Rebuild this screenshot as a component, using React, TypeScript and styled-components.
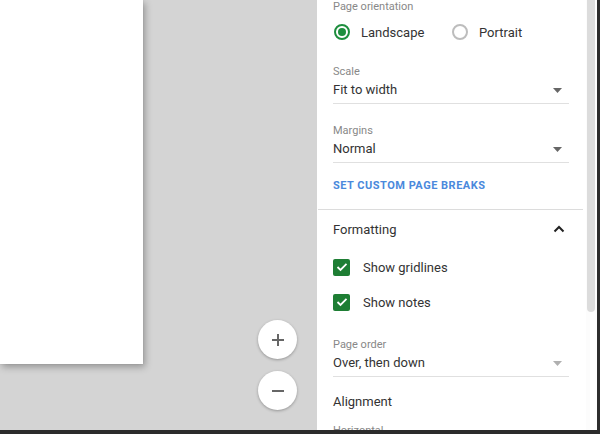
import React from 'react';
import styled, { createGlobalStyle } from 'styled-components';

const GlobalStyle = createGlobalStyle`
  html, body {
    margin: 0;
    padding: 0;
    overflow: hidden;
  }
  body {
    font-family: Roboto, "Liberation Sans", Arial, sans-serif;
  }
  * {
    box-sizing: border-box;
  }
`;

const Frame = styled.div`
  width: 600px;
  height: 434px;
  display: flex;
  flex-direction: column;
  overflow: hidden;
`;

const Main = styled.div`
  flex: 1;
  display: flex;
  min-height: 0;
`;

const Canvas = styled.div`
  position: relative;
  flex: 1;
  background: #d4d4d4;
  overflow: hidden;
`;

const Sheet = styled.div`
  width: 143px;
  height: 364px;
  background: #fff;
  box-shadow: 2px 3px 7px rgba(0, 0, 0, 0.3), 0 0 1px rgba(0, 0, 0, 0.15);
`;

const ZoomControls = styled.div`
  position: absolute;
  right: 20px;
  bottom: 20px;
  display: flex;
  flex-direction: column;
  gap: 12px;
`;

const ZoomButton = styled.button`
  width: 39px;
  height: 39px;
  border-radius: 50%;
  border: none;
  background: #fff;
  padding: 0;
  display: flex;
  align-items: center;
  justify-content: center;
  box-shadow: 0 1px 3px rgba(0, 0, 0, 0.3);
  cursor: pointer;
`;

const Panel = styled.div`
  width: 280px;
  display: flex;
  background: #fff;
`;

const Content = styled.div`
  flex: 1;
  display: flex;
  flex-direction: column;
  overflow: hidden;

  & > * {
    flex-shrink: 0;
  }
`;

const Section = styled.div`
  padding: 0 17px 0 16px;
  display: flex;
  flex-direction: column;

  & > * {
    flex-shrink: 0;
  }
`;

const Label = styled.div<{ $top?: number }>`
  margin-top: ${p => p.$top ?? 0}px;
  font-size: 11px;
  line-height: 14px;
  color: #888;
`;

const RadioRow = styled.div`
  margin-top: 6px;
  height: 24px;
  display: flex;
  align-items: center;
`;

const RadioOption = styled.label`
  display: flex;
  align-items: center;
  gap: 11px;
  width: 118px;
  font-size: 13px;
  color: #333;
`;

const RadioCircle = styled.span<{ $on?: boolean }>`
  width: 16px;
  height: 16px;
  border-radius: 50%;
  border: 2px solid ${p => (p.$on ? '#1e8e3e' : '#bdbdbd')};
  display: flex;
  align-items: center;
  justify-content: center;
  margin-left: 1px;

  &::after {
    content: '';
    width: 8px;
    height: 8px;
    border-radius: 50%;
    background: ${p => (p.$on ? '#1e8e3e' : 'transparent')};
  }
`;

const Select = styled.div<{ $disabled?: boolean }>`
  margin-top: 2px;
  display: flex;
  align-items: center;
  justify-content: space-between;
  height: 23px;
  padding-bottom: 4px;
  border-bottom: 1px solid #e0e0e0;
  font-size: 13px;
  line-height: 18px;
  color: #333;

  svg {
    margin-right: 7px;
    fill: ${p => (p.$disabled ? '#b0b0b0' : '#666')};
  }
`;

const LinkButton = styled.div`
  margin-top: 16px;
  font-size: 11px;
  line-height: 14px;
  font-weight: 700;
  color: #4a89dc;
  letter-spacing: 0.5px;
`;

const Divider = styled.div`
  margin: 16px 3px 0 1px;
  height: 1px;
  background: #dcdcdc;
`;

const Heading = styled.div<{ $top: number }>`
  margin-top: ${p => p.$top}px;
  height: 18px;
  display: flex;
  align-items: center;
  justify-content: space-between;
  font-size: 13px;
  color: #333;

  svg {
    margin-right: 4px;
  }
`;

const CheckRow = styled.label<{ $top: number }>`
  margin-top: ${p => p.$top}px;
  height: 24px;
  display: flex;
  align-items: center;
  gap: 13px;
  font-size: 13px;
  color: #333;
`;

const CheckBox = styled.span`
  width: 17px;
  height: 17px;
  border-radius: 2px;
  background: #1e7e34;
  display: flex;
  align-items: center;
  justify-content: center;
`;

const ScrollTrack = styled.div`
  width: 11px;
  padding-left: 1px;
  background: #fcfcfc;
`;

const Thumb = styled.div`
  width: 8px;
  height: 312px;
  background: #dcdcdc;
  border-radius: 0 0 4px 4px;
`;

const EdgeRight = styled.div`
  width: 3px;
  background: #2b2b2b;
`;

const BottomBar = styled.div`
  height: 4px;
  background: #2b2b2b;
`;

const Caret = () => (
  <svg width="9" height="5" viewBox="0 0 9 5">
    <path d="M0 0 L9 0 L4.5 5 Z" />
  </svg>
);

const ChevronUp = () => (
  <svg width="12" height="8" viewBox="0 0 12 8">
    <path d="M1.5 6.5 L6 2 L10.5 6.5" fill="none" stroke="#222" strokeWidth="2" />
  </svg>
);

const Check = () => (
  <svg width="12" height="10" viewBox="0 0 12 10">
    <path d="M1.5 5 L4.5 8 L10.5 1.8" fill="none" stroke="#fff" strokeWidth="1.8" />
  </svg>
);

const Plus = () => (
  <svg width="14" height="14" viewBox="0 0 14 14">
    <path d="M7 1 V13 M1 7 H13" stroke="#666" strokeWidth="2" />
  </svg>
);

const Minus = () => (
  <svg width="14" height="14" viewBox="0 0 14 14">
    <path d="M1 7 H13" stroke="#666" strokeWidth="2" />
  </svg>
);

const App = () => {
  return (
    <Frame>
      <GlobalStyle />
      <Main>
        <Canvas>
          <Sheet />
          <ZoomControls>
            <ZoomButton aria-label="Zoom in">
              <Plus />
            </ZoomButton>
            <ZoomButton aria-label="Zoom out">
              <Minus />
            </ZoomButton>
          </ZoomControls>
        </Canvas>
        <Panel>
          <Content>
            <Section>
              <Label>Page orientation</Label>
              <RadioRow>
                <RadioOption>
                  <RadioCircle $on />
                  Landscape
                </RadioOption>
                <RadioOption>
                  <RadioCircle />
                  Portrait
                </RadioOption>
              </RadioRow>

              <Label $top={21}>Scale</Label>
              <Select>
                Fit to width
                <Caret />
              </Select>

              <Label $top={20}>Margins</Label>
              <Select>
                Normal
                <Caret />
              </Select>

              <LinkButton>SET CUSTOM PAGE BREAKS</LinkButton>
            </Section>
            <Divider />
            <Section>
              <Heading $top={10}>
                Formatting
                <ChevronUp />
              </Heading>
              <CheckRow $top={17}>
                <CheckBox>
                  <Check />
                </CheckBox>
                Show gridlines
              </CheckRow>
              <CheckRow $top={11}>
                <CheckBox>
                  <Check />
                </CheckBox>
                Show notes
              </CheckRow>

              <Label $top={24}>Page order</Label>
              <Select $disabled>
                Over, then down
                <Caret />
              </Select>

              <Heading $top={15}>Alignment</Heading>
              <Label $top={14}>Horizontal</Label>
            </Section>
          </Content>
          <ScrollTrack>
            <Thumb />
          </ScrollTrack>
        </Panel>
        <EdgeRight />
      </Main>
      <BottomBar />
    </Frame>
  );
};

export default App;
